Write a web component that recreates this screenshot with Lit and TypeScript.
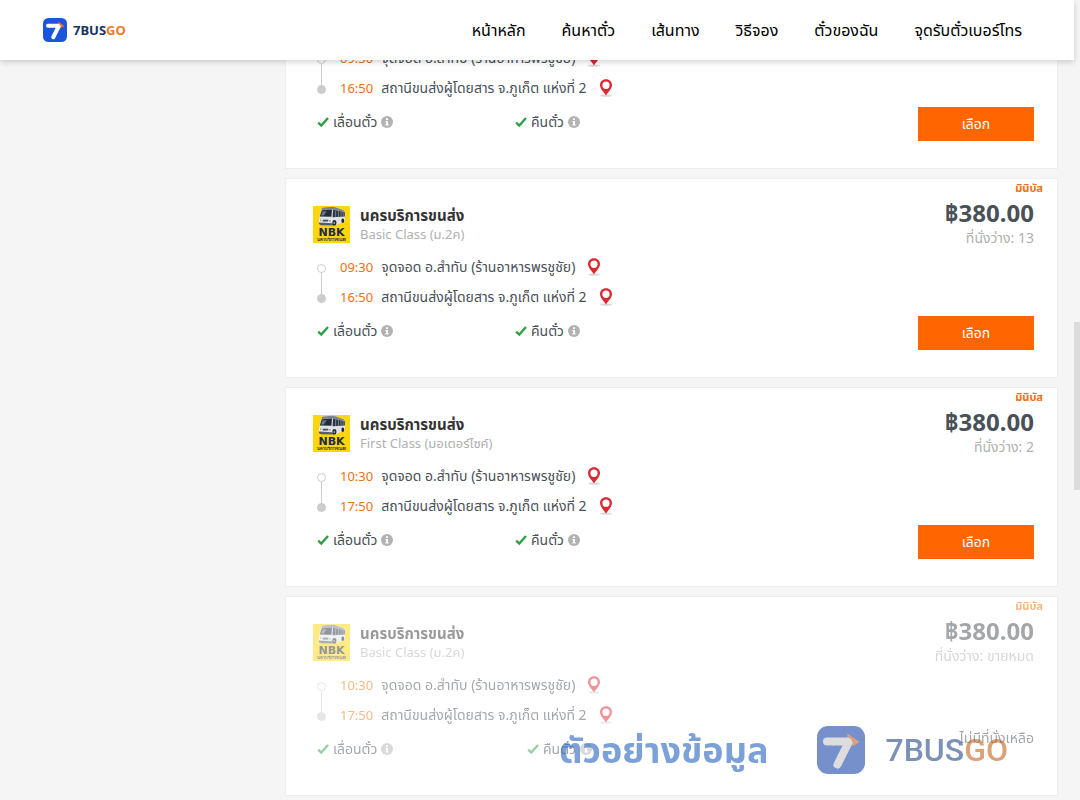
import { LitElement, html, css, svg } from "lit";
import { customElement, property } from "lit/decorators.js";
import { classMap } from "lit/directives/class-map.js";

interface Trip {
  operator: string;
  vehicleClass: string;
  depart: string;
  arrive: string;
  from: string;
  to: string;
  type: string;
  price: string;
  seats: string;
  soldOut?: boolean;
}

const FROM = "จุดจอด อ.สำทับ (ร้านอาหารพรชูชัย)";
const TO = "สถานีขนส่งผู้โดยสาร จ.ภูเก็ต แห่งที่ 2";
const OPERATOR = "นครบริการขนส่ง";

const common = { operator: OPERATOR, from: FROM, to: TO, type: "มินิบัส", price: "฿380.00" };

const TRIPS: Trip[] = [
  { ...common, vehicleClass: "First Class (มอเตอร์ไซค์)", depart: "09:30", arrive: "16:50", seats: "2" },
  { ...common, vehicleClass: "Basic Class (ม.2ค)", depart: "09:30", arrive: "16:50", seats: "13" },
  { ...common, vehicleClass: "First Class (มอเตอร์ไซค์)", depart: "10:30", arrive: "17:50", seats: "2" },
  { ...common, vehicleClass: "Basic Class (ม.2ค)", depart: "10:30", arrive: "17:50", seats: "ขายหมด", soldOut: true },
];

const NAV = ["หน้าหลัก", "ค้นหาตั๋ว", "เส้นทาง", "วิธีจอง", "ตั๋วของฉัน", "จุดรับตั๋วเบอร์โทร"];

const brandMark = svg`
  <rect class="tile" width="48" height="48" rx="11"/>
  <path class="arrow" d="M30.5 8L42.5 16L35.5 20L30.5 15Z"/>
  <path class="seven" d="M10 15.5H32L20.5 38.5" fill="none" stroke-width="8" stroke-linecap="round" stroke-linejoin="round"/>
  <path class="arrow" d="M30.5 8L42.5 16L35.6 20C36.4 15.5 34 12 30.8 11.4Z"/>`;

const pin = html`<svg class="pin" viewBox="0 0 14 18" aria-hidden="true">
  <ellipse cx="7" cy="16.6" rx="6" ry="1.2" fill="#d9d9d9"/>
  <path fill="#dc2630" fill-rule="evenodd" d="M7 0.3C3.5 0.3 1 2.9 1 6.1C1 9.8 4.6 12.6 7 16.6C9.4 12.6 13 9.8 13 6.1C13 2.9 10.5 0.3 7 0.3ZM7 2.5A3.6 3.7 0 1 1 7 9.9A3.6 3.7 0 1 1 7 2.5Z"/>
</svg>`;

const check = html`<svg class="check" viewBox="0 0 12 12" aria-hidden="true">
  <path d="M1.2 6.6L4.3 9.6L11 2" fill="none" stroke="#2c9f45" stroke-width="2.3"/>
</svg>`;

const info = html`<svg class="info" viewBox="0 0 12 12" aria-hidden="true">
  <circle cx="6" cy="6" r="6" fill="#b2b2b2"/>
  <path fill="#fff" d="M5 2.2H7V4H5ZM4.4 4.9H7V8.3H7.7V9.6H4.4V8.3H5.1V6.1H4.4Z"/>
</svg>`;

const operatorLogo = html`<svg class="operator-logo" viewBox="0 0 37 37" role="img" aria-label="NBK">
  <rect width="37" height="37" fill="#ffd60a"/>
  <path d="M6.2 11L8.4 3Q8.9 1.6 10.6 1.4L19 .8Q21 .7 23 1.4L31 4.6Q32 5.2 32 6.6V15.6L22 19.4L8 18.8L5.8 17.6Z" fill="#dfe2e6"/>
  <path d="M8.4 3.2Q9 1.6 10.6 1.4L19 .8Q21 .7 23 1.4L31 4.6L31.8 6L20.5 3.6L9 4Z" fill="#7b838e"/>
  <path d="M6.8 10.4L8.7 4.2L19 3.4L18.4 10.8Z" fill="#242c38"/>
  <path d="M9.4 5.4L13.6 5L11 9.6L8 9.4Z" fill="#667689"/>
  <path d="M20 3.6L31.8 6.2V10.4L19.6 11.2Z" fill="#2d3644"/>
  <path d="M22.6 4.4V11M25.4 5V10.8M28 5.6V10.6M30.2 6V10.4" stroke="#aab1bb" stroke-width=".6"/>
  <path d="M6 13.2L18.4 13.6V16L6 15.4Z" fill="#fff"/>
  <path d="M9.6 13.6H15.4V15.6H9.6Z" fill="#4c5460"/>
  <circle cx="7.7" cy="14.2" r="1" fill="#9aa3ae"/><circle cx="17" cy="14.8" r="1.1" fill="#9aa3ae"/>
  <path d="M5.8 16.6L19 17.2L21 19.4L8 19.2L5.8 18Z" fill="#555d69"/>
  <ellipse cx="21.4" cy="16.8" rx="2" ry="2.8" fill="#20262f"/>
  <ellipse cx="21.3" cy="16.9" rx=".8" ry="1.2" fill="#9aa3ae"/>
  <ellipse cx="29.8" cy="14.8" rx="1.4" ry="2.2" fill="#20262f"/>
  <text x="18.5" y="30" text-anchor="middle" class="logo-name">NBK</text>
  <text x="18.5" y="35.4" text-anchor="middle" class="logo-sub">${OPERATOR}</text>
</svg>`;

@customElement("trip-card")
export class TripCard extends LitElement {
  @property({ attribute: false }) trip!: Trip;

  static styles = css`
    :host {
      display: block;
    }
    .card {
      display: grid;
      grid-template-columns: minmax(0, 1fr) auto;
      box-sizing: border-box;
      min-height: 200px;
      padding: 27px 23px 24px 27px;
      background: #fff;
      border: 1px solid #eeeeee;
      position: relative;
      font-size: 14px;
      line-height: 18px;
      color: #495057;
    }
    .sold > * {
      opacity: 0.5;
    }
    .head {
      display: flex;
      gap: 10px;
      height: 37px;
    }
    .operator-logo {
      width: 37px;
      height: 37px;
      flex: none;
    }
    .logo-name {
      font: 700 11px "DejaVu Sans", sans-serif;
      fill: #222b3c;
    }
    .logo-sub {
      font: 700 4px "Noto Sans", sans-serif;
      fill: #222b3c;
    }
    .operator {
      margin: 0;
      font-size: 15px;
      line-height: 19px;
      font-weight: 700;
      color: #333;
    }
    .class {
      margin: 0;
      font-size: 13px;
      color: #b0b0b0;
    }
    .stops {
      list-style: none;
      margin: 9px 0 0;
      padding: 0 0 0 4px;
    }
    .stop {
      display: flex;
      align-items: center;
      height: 30px;
    }
    .dot {
      box-sizing: border-box;
      width: 9px;
      height: 9px;
      border-radius: 50%;
      border: 1px solid #ccc;
      margin-top: 2px;
      position: relative;
    }
    .start .dot::after {
      content: "";
      position: absolute;
      left: 3px;
      top: 8px;
      width: 1px;
      height: 22px;
      background: #ccc;
    }
    .end .dot {
      background: #ccc;
    }
    .stop time {
      margin: 0 8px 0 14px;
      font-size: 13px;
      color: #f07010;
    }
    .place {
      margin-right: 12px;
      white-space: nowrap;
    }
    .pin {
      width: 14px;
      height: 18px;
    }
    .perks {
      display: flex;
      list-style: none;
      margin: 10px 0 0;
      padding: 0 0 0 4px;
    }
    .perk {
      display: flex;
      align-items: center;
      gap: 4px;
      flex: 0 0 198px;
    }
    .sold .perk {
      flex-basis: 210px;
    }
    .check,
    .info {
      width: 12px;
      height: 12px;
    }
    .side {
      display: flex;
      flex-direction: column;
      align-items: flex-end;
    }
    .tag {
      position: absolute;
      top: 2px;
      right: 14px;
      font-size: 11px;
      line-height: 14px;
      font-weight: 700;
      color: #f07010;
    }
    .price {
      margin: -9px 0 0;
      font-size: 24px;
      line-height: 32px;
      font-weight: 700;
    }
    .seats {
      margin: 0;
      color: #b0b0b0;
    }
    .choose {
      margin-top: 69px;
      width: 116px;
      height: 34px;
      padding: 0;
      border: 0;
      background: #ff6600;
      color: #fff;
      font: inherit;
    }
    .none {
      margin: 64px 0 0;
    }
  `;

  render() {
    const t = this.trip;
    return html`<article class=${classMap({ card: true, sold: !!t.soldOut })}>
      <div class="body">
        <header class="head">
          ${operatorLogo}
          <div>
            <h2 class="operator">${t.operator}</h2>
            <p class="class">${t.vehicleClass}</p>
          </div>
        </header>
        <ul class="stops">
          <li class="stop start"><span class="dot"></span><time>${t.depart}</time><span class="place">${t.from}</span>${pin}</li>
          <li class="stop end"><span class="dot"></span><time>${t.arrive}</time><span class="place">${t.to}</span>${pin}</li>
        </ul>
        <ul class="perks">
          <li class="perk">${check}<span>เลื่อนตั๋ว</span>${info}</li>
          <li class="perk">${check}<span>คืนตั๋ว</span>${info}</li>
        </ul>
      </div>
      <div class="side">
        <p class="price">${t.price}</p>
        <p class="seats">ที่นั่งว่าง: ${t.seats}</p>
        ${t.soldOut
          ? html`<p class="none">ไม่มีที่นั่งเหลือ</p>`
          : html`<button class="choose" type="button">เลือก</button>`}
      </div>
      <span class="tag">${t.type}</span>
    </article>`;
  }
}

@customElement("app-root")
export class AppRoot extends LitElement {
  static styles = css`
    :host {
      display: block;
      position: relative;
      box-sizing: border-box;
      height: 100vh;
      overflow: hidden;
      padding-right: 6px;
      background: #f5f5f5;
      font-family: "Noto Sans", "Noto Sans Thai", sans-serif;
    }
    .top {
      position: relative;
      z-index: 2;
      display: flex;
      align-items: center;
      justify-content: space-between;
      box-sizing: border-box;
      height: 60px;
      padding: 0 52px 0 43px;
      background: #fff;
      box-shadow: 0 2px 6px rgba(0, 0, 0, 0.18);
    }
    .brand {
      display: flex;
      align-items: center;
      gap: 6px;
      text-decoration: none;
      font-size: 13px;
      line-height: 18px;
      font-weight: 700;
      color: #17325c;
    }
    .tile {
      fill: #1a56db;
    }
    .seven {
      stroke: #fff;
    }
    .arrow {
      fill: #f26b21;
    }
    .brand-mark {
      width: 24px;
      height: 24px;
    }
    .go {
      color: #f07a24;
    }
    .menu {
      display: flex;
      gap: 36px;
    }
    .menu-link {
      font-size: 16px;
      line-height: 24px;
      color: #000;
      text-decoration: none;
      white-space: nowrap;
    }
    .list {
      display: grid;
      gap: 9px;
      margin: -91px 16px 0 285px;
    }
    .watermark {
      position: absolute;
      z-index: 3;
      right: 72px;
      bottom: 22px;
      display: flex;
      align-items: center;
      opacity: 0.57;
      pointer-events: none;
    }
    .watermark .tile {
      fill: #0e3ca4;
    }
    .watermark .seven {
      stroke: #c4c4c4;
    }
    .watermark .arrow {
      fill: #c25a20;
    }
    .sample {
      font-size: 36px;
      line-height: 56px;
      font-weight: 700;
      color: #1a5bbd;
      margin-right: 49px;
    }
    .mark-large {
      width: 48px;
      height: 48px;
      margin-right: 20px;
    }
    .name-large {
      font-family: Roboto, sans-serif;
      font-size: 32px;
      line-height: 56px;
      font-weight: 500;
      color: #17407f;
    }
    .name-large .go {
      color: #c25a10;
    }
    .thumb {
      position: absolute;
      right: 0;
      top: 322px;
      width: 6px;
      height: 168px;
      background: #dcdcdc;
    }
  `;

  render() {
    return html`
      <header class="top">
        <a class="brand" href="#">
          <svg class="brand-mark" viewBox="0 0 48 48" aria-hidden="true">${brandMark}</svg>
          <span>7BUS<span class="go">GO</span></span>
        </a>
        <nav class="menu">${NAV.map((n) => html`<a class="menu-link" href="#">${n}</a>`)}</nav>
      </header>
      <main class="list">
        ${TRIPS.map((t) => html`<trip-card .trip=${t}></trip-card>`)}
      </main>
      <div class="watermark">
        <span class="sample">ตัวอย่างข้อมูล</span>
        <svg class="mark-large" viewBox="0 0 48 48" aria-hidden="true">${brandMark}</svg>
        <span class="name-large">7BUS<span class="go">GO</span></span>
      </div>
      <div class="thumb"></div>
    `;
  }
}
